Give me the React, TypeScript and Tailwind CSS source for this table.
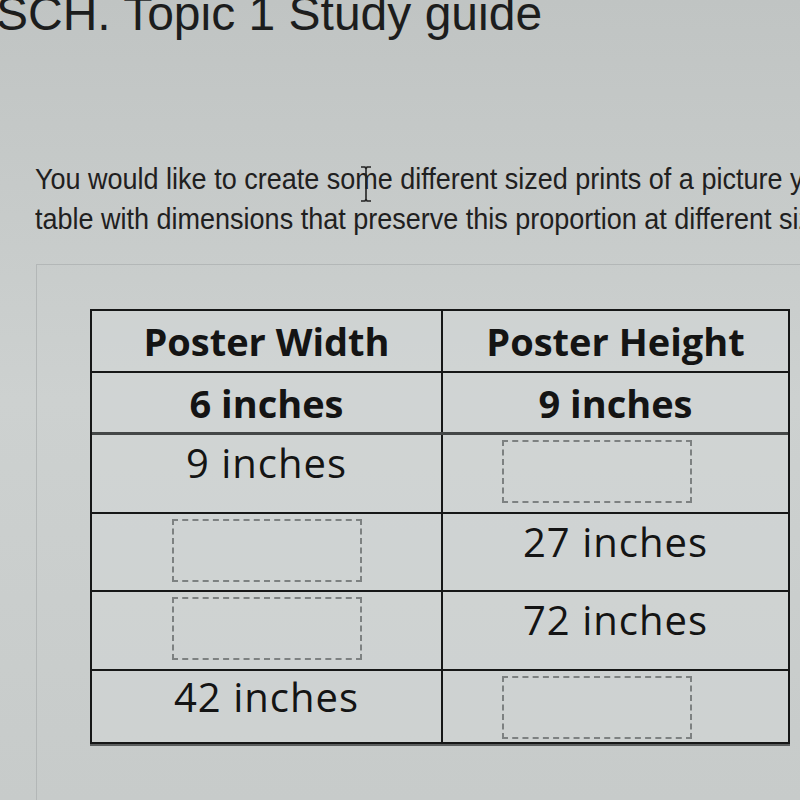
const rows: { w: string | null; h: string | null; height: string; pt: string }[] = [
  { w: "6 inches", h: "9 inches", height: "h-[62px]", pt: "" },
  { w: "9 inches", h: null, height: "h-[79px]", pt: "pt-[8px]" },
  { w: null, h: "27 inches", height: "h-[78px]", pt: "pt-[8px]" },
  { w: null, h: "72 inches", height: "h-[79px]", pt: "pt-[8px]" },
  { w: "42 inches", h: null, height: "h-[71px]", pt: "pt-[6px]" },
];

const BlankBox = () => (
  <div className="w-[190px] h-[63px] border-2 border-dashed border-[#7d8181]" />
);

const Cell = ({
  value,
  pt,
  right,
}: {
  value: string | null;
  pt: string;
  right?: boolean;
}) => {
  if (value === null) {
    return (
      <div className={`flex justify-center pt-[5px] ${right ? "pr-[38px]" : ""}`}>
        <BlankBox />
      </div>
    );
  }
  return (
    <div
      className={`flex justify-center ${pt} font-normal text-[40px] tracking-[1px] leading-none text-[#141414]`}
    >
      {value}
    </div>
  );
};

const BoldCell = ({ value }: { value: string | null }) => (
  <div className="h-full flex items-center justify-center font-bold text-[38px] leading-none text-[#141414]">
    {value}
  </div>
);

export default function App() {
  return (
    <div className="w-[800px] h-[800px] overflow-hidden relative bg-linear-to-b from-[#c0c4c3] via-[#cdd1d0] to-[#c7cbca] font-['Open_Sans',sans-serif]">
      {/* page title, cut off at the top */}
      <h1 className="mt-[-10px] ml-[-4px] whitespace-nowrap text-[48px] leading-none text-[#1c1d1d] font-['Liberation_Sans',Arial,sans-serif]">
        SCH. Topic 1 Study guide
      </h1>

      {/* question text */}
      <div className="mt-[121px] ml-[35px] w-[765px] overflow-hidden">
        <p className="w-[860px] origin-left scale-x-[0.9] whitespace-nowrap text-[30px] leading-[40px] text-[#1f2020] font-['Liberation_Sans',Arial,sans-serif]">
          You would like to create some different sized prints of a picture you took. Complete the
          <br />
          table with dimensions that preserve this proportion at different sizes.
        </p>
      </div>

      {/* text cursor */}
      <svg
        className="absolute left-[359px] top-[166px]"
        width="14"
        height="36"
        viewBox="0 0 14 36"
      >
        <path d="M2 1h4l1 2 1-2h4M7 3v30M2 35h4l1-2 1 2h4" stroke="#222" strokeWidth="1.6" fill="none" />
      </svg>

      {/* question panel */}
      <div className="mt-[25px] ml-[36px] h-[600px] border-l border-t border-[#b3b7b7] pl-[53px] pt-[44px]">
        <div className="w-[700px] border-2 border-[#161717] bg-[#d4d8d7]/50 shadow-[0_2px_0_#5b5e5e]">
          <div className="grid grid-cols-[351px_345px] h-[62px] border-b-2 border-[#161717]">
            <div className="h-full border-r-2 border-[#161717]">
              <BoldCell value="Poster Width" />
            </div>
            <BoldCell value="Poster Height" />
          </div>
          {rows.map((row, index) => {
            return (
              <div
                key={index}
                className={`grid grid-cols-[351px_345px] ${row.height} ${
                  index === 0
                    ? "border-b-[3px] border-[#444747]"
                    : index < rows.length - 1
                    ? "border-b-2 border-[#161717]"
                    : ""
                }`}
              >
                <div className="h-full border-r-2 border-[#161717]">
                  {index === 0 ? <BoldCell value={row.w} /> : <Cell value={row.w} pt={row.pt} />}
                </div>
                <div className="h-full">
                  {index === 0 ? (
                    <BoldCell value={row.h} />
                  ) : (
                    <Cell value={row.h} pt={row.pt} right />
                  )}
                </div>
              </div>
            );
          })}
        </div>
      </div>
    </div>
  );
}
